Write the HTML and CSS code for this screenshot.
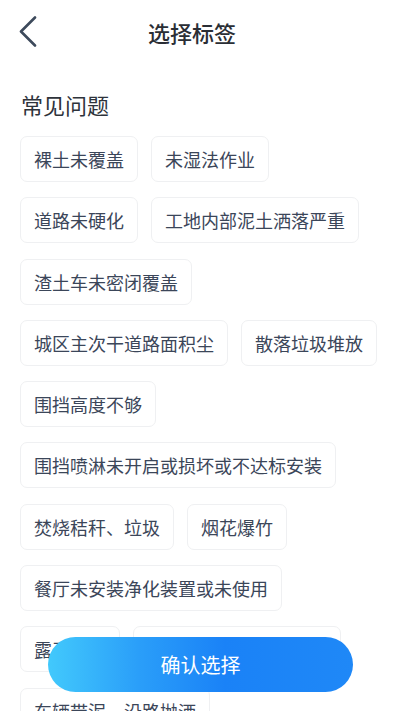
FILE: index.html
```html
<!DOCTYPE html>
<html lang="zh-CN">
<head>
<meta charset="utf-8">
<title>选择标签</title>
<link rel="stylesheet" href="styles.css">
</head>
<body>
<header class="header">
  <button class="back" aria-label="返回">
    <svg width="18" height="32" viewBox="0 0 18 32"><path d="M16 1.5 L2 15.5 L16 29.5" fill="none" stroke="#3d4a5c" stroke-width="2.6" stroke-linecap="round" stroke-linejoin="round"/></svg>
  </button>
  <h1 class="title">选择标签</h1>
  <span class="spacer"></span>
</header>
<main class="content">
  <h2 class="section-title">常见问题</h2>
  <div class="tags">
    <span class="tag">裸土未覆盖</span>
    <span class="tag">未湿法作业</span>
    <span class="tag">道路未硬化</span>
    <span class="tag">工地内部泥土洒落严重</span>
    <span class="tag">渣土车未密闭覆盖</span>
    <span class="tag">城区主次干道路面积尘</span>
    <span class="tag">散落垃圾堆放</span>
    <span class="tag">围挡高度不够</span>
    <span class="tag">围挡喷淋未开启或损坏或不达标安装</span>
    <span class="tag">焚烧秸秆、垃圾</span>
    <span class="tag">烟花爆竹</span>
    <span class="tag">餐厅未安装净化装置或未使用</span>
    <span class="tag">露天烧烤</span>
    <span class="tag">工地出入口未冲洗车辆</span>
    <span class="tag">车辆带泥、沿路抛洒</span>
  </div>
</main>
<button class="confirm">确认选择</button>
</body>
</html>
```
FILE: styles.css
```css
html, body {
  margin: 0;
  padding: 0;
  background: #ffffff;
  font-family: "Noto Sans CJK SC", "Noto Sans", sans-serif;
}
.header {
  display: grid;
  grid-template-columns: 56px 1fr 72px;
  align-items: center;
  height: 64px;
}
.back {
  border: 0;
  background: none;
  padding: 0 0 0 19px;
  height: 64px;
  display: flex;
  align-items: center;
  cursor: pointer;
}
.back svg { display: block; }
.title {
  margin: 0;
  text-align: center;
  font-size: 22px;
  font-weight: 500;
  color: #2a2e35;
  line-height: 64px;
}
.content {
  padding: 0 20px 120px;
}
.section-title {
  margin: 25px 0 16px 1px;
  font-size: 22px;
  font-weight: 400;
  color: #2e333b;
  line-height: 31px;
}
.tags {
  display: flex;
  flex-wrap: wrap;
  column-gap: 13px;
  row-gap: 15.3px;
}
.tag {
  display: inline-block;
  height: 44px;
  line-height: 44px;
  padding: 0 13px;
  border: 1px solid #eff0f2;
  border-radius: 7px;
  font-size: 18px;
  color: #3b4659;
  background: #fff;
  white-space: nowrap;
}
.confirm {
  position: fixed;
  left: 48px;
  right: 47px;
  bottom: 19px;
  height: 55px;
  border: 0;
  border-radius: 28px;
  background: linear-gradient(90deg, #42c9fc 0%, #2a9ef9 30%, #1a82f7 58%, #1f88f7 100%);
  color: #ffffff;
  font-family: "Noto Sans CJK SC", "Noto Sans", sans-serif;
  font-size: 20px;
  font-weight: 400;
  cursor: pointer;
}
```
